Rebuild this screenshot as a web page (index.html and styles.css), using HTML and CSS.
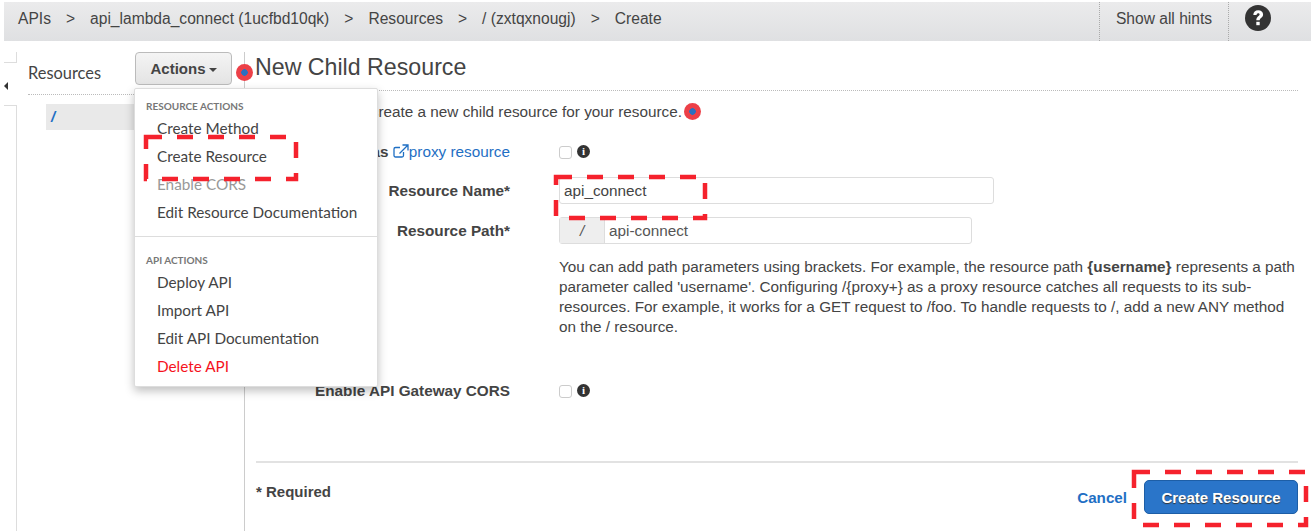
FILE: index.html
```html
<!DOCTYPE html>
<html lang="en">
<head>
  <meta charset="UTF-8">
  <title>New Child Resource</title>
  <link rel="stylesheet" href="styles.css">
</head>
<body>
  <div class="topbar">
    <div class="crumbs">
      <span>APIs</span><span>&gt;</span>
      <span>api_lambda_connect (1ucfbd10qk)</span><span>&gt;</span>
      <span>Resources</span><span>&gt;</span>
      <span>/ (zxtqxnougj)</span><span>&gt;</span>
      <span>Create</span>
    </div>
    <div class="hints">Show all hints</div>
    <div class="help">
      <svg width="26" height="26" viewBox="0 0 26 26">
        <circle cx="13" cy="13" r="13" fill="#333"/>
        <path d="M8.300 10c0-2.900 2.100-4.700 4.900-4.700 2.900 0 4.900 1.700 4.900 4.100 0 3.100-3.400 3.400-3.400 5.800h-3.400c0-3.600 3.300-3.900 3.300-5.600 0-.8-.6-1.300-1.500-1.300-1 0-1.500.7-1.500 1.700z" fill="#fff"/>
        <rect x="11.300" y="16.800" width="3.400" height="3.400" fill="#fff"/>
      </svg>
    </div>
  </div>

  <div class="layout">
    <div class="rail">
      <div class="rail-top"></div>
      <div class="rail-arrow"></div>
      <div class="rail-line"></div>
    </div>

    <aside class="sidebar">
      <div class="side-head">
        <span class="side-title">Resources</span>
        <button class="actions">Actions<i class="caret"></i></button>
      </div>
      <div class="tree-row">/</div>
    </aside>

    <main class="content">
      <h1 class="title">New Child Resource</h1>
      <p class="intro">Use this page to create a new child resource for your resource.<span class="dot dot-intro"></span></p>

      <div class="form-row row-proxy">
        <div class="label label-plain">Configure as <a href="#">
          <svg class="ext" width="16" height="14" viewBox="0 0 16 14" fill="none" stroke="#1f6fc4" stroke-width="1.300">
            <path d="M10.500 8v3.500a1.500 1.500 0 0 1-1.500 1.500H2.500A1.500 1.500 0 0 1 1 11.500V5a1.500 1.500 0 0 1 1.500-1.500H7"/>
            <path d="M9.500 1H15v5.500M15 1L6.500 9.500"/>
          </svg>proxy resource</a></div>
        <div class="field"><input type="checkbox" class="check"><i class="info">i</i></div>
      </div>

      <div class="form-row row-name">
        <div class="label">Resource Name*</div>
        <div class="field"><div class="input input-name">api_connect</div></div>
      </div>

      <div class="form-row row-path">
        <div class="label">Resource Path*</div>
        <div class="field">
          <div class="input input-path"><span class="addon">/</span><span class="path-val">api-connect</span></div>
        </div>
      </div>

      <p class="help-text">You can add path parameters using brackets. For example, the resource path <b>{username}</b> represents a path parameter called 'username'. Configuring /{proxy+} as a proxy resource catches all requests to its sub-resources. For example, it works for a GET request to /foo. To handle requests to /, add a new ANY method on the / resource.</p>

      <div class="form-row row-cors">
        <div class="label">Enable API Gateway CORS</div>
        <div class="field"><input type="checkbox" class="check"><i class="info">i</i></div>
      </div>

      <div class="footer">
        <b class="required">* Required</b>
        <a href="#" class="cancel">Cancel</a>
        <button class="primary">Create Resource</button>
      </div>
    </main>
  </div>

  <span class="dot dot-actions"></span>

  <div class="menu">
    <div class="menu-head">RESOURCE ACTIONS</div>
    <div class="menu-item">Create Method</div>
    <div class="menu-item">Create Resource</div>
    <div class="menu-item disabled">Enable CORS</div>
    <div class="menu-item">Edit Resource Documentation</div>
    <div class="menu-sep"></div>
    <div class="menu-head">API ACTIONS</div>
    <div class="menu-item">Deploy API</div>
    <div class="menu-item">Import API</div>
    <div class="menu-item">Edit API Documentation</div>
    <div class="menu-item danger">Delete API</div>
  </div>

  <!-- red annotation boxes from the tutorial -->
  <svg class="marks" width="1311" height="531" fill="none" stroke="#f5222d" stroke-width="4.500" stroke-dasharray="16 15">
    <rect x="146" y="137" width="150" height="42"/>
    <rect x="556" y="177" width="149" height="41"/>
    <rect x="1134" y="472" width="172" height="53"/>
  </svg>
</body>
</html>
```

FILE: styles.css
```css
html, body {
  margin: 0;
  height: 531px;
  overflow: hidden;
}
body {
  position: relative;
  font-family: "Liberation Sans", Arial, sans-serif;
  font-size: 15.3px;
  color: #444;
  background: #fff;
}

/* top bar */
.topbar {
  display: flex;
  align-items: stretch;
  height: 39px;
  margin: 2px 0 0 4px;
  background: linear-gradient(#ebebec, #dfe0e2);
}
.crumbs {
  flex: 1;
  display: flex;
  align-items: center;
  gap: 15px;
  padding: 0 0 6px 14px;
  font-size: 15.6px;
  color: #444;
}
.hints {
  width: 130px;
  display: flex;
  align-items: center;
  justify-content: center;
  padding-bottom: 6px;
  border-left: 1px dotted #aaa;
  border-right: 1px dotted #aaa;
  box-sizing: border-box;
  font-size: 15.6px;
}
.help {
  width: 82px;
  padding: 3px 0 0 16px;
  box-sizing: border-box;
}

/* columns */
.layout {
  display: flex;
  height: 490px;
}
.rail {
  width: 17px;
  position: relative;
  box-sizing: border-box;
}
.rail-top {
  position: absolute;
  left: 4px;
  top: 11px;
  width: 12px;
  height: 10px;
  border-right: 1px solid #ddd;
  border-bottom: 1px solid #ddd;
}
.rail-arrow {
  position: absolute;
  left: 4px;
  top: 41px;
  border: 4px solid transparent;
  border-left: 0;
  border-right: 4px solid #333;
}
.rail-line {
  position: absolute;
  left: 4px;
  top: 64px;
  bottom: 0;
  width: 12px;
  border-right: 1px solid #ddd;
  border-top: 1px solid #ddd;
}
.sidebar {
  width: 228px;
  border-right: 1px solid #ccc;
  margin-top: 11px;
  box-sizing: border-box;
}
.side-head {
  display: flex;
  align-items: flex-start;
  height: 42px;
  margin: 0 0 9px 11px;
  border-bottom: 1px dotted #bbb;
}
.side-title {
  width: 107px;
  font-family: Lato, sans-serif;
  font-size: 16.400px;
  line-height: 20px;
  color: #444;
  padding-top: 11px;
}
.actions {
  width: 97px;
  height: 33px;
  border: 1px solid #bbb;
  border-radius: 4px;
  background: linear-gradient(#f4f4f4, #e4e4e4);
  font-family: "Liberation Sans", Arial, sans-serif;
  font-size: 15px;
  font-weight: bold;
  color: #444;
  padding: 0;
}
.caret {
  display: inline-block;
  margin-left: 3px;
  vertical-align: 2px;
  border: 4px solid transparent;
  border-bottom: 0;
  border-top: 4px solid #444;
}
.tree-row {
  margin-left: 29px;
  height: 26px;
  line-height: 26px;
  padding-left: 5px;
  background: #e9e9e9;
  color: #1f6fc4;
  font-style: italic;
  font-weight: bold;
  font-size: 15px;
}
.content {
  flex: 1;
  padding: 10px 13px 0 11px;
  position: relative;
  min-width: 0;
}
.title {
  margin: 0;
  font-size: 23.200px;
  font-weight: normal;
  line-height: 32px;
  color: #444;
  text-indent: -1px;
  padding-bottom: 7px;
  border-bottom: 1px dotted #bbb;
}
.intro {
  margin: 11px 0 0;
  line-height: 20px;
}
.form-row {
  display: flex;
  align-items: center;
}
.label {
  width: 254px;
  text-align: right;
  font-weight: bold;
  color: #444;
  flex: none;
}
.label a {
  font-weight: normal;
  color: #1f6fc4;
  text-decoration: none;
}
.ext {
  vertical-align: -1px;
}
.field {
  margin-left: 49px;
  display: flex;
  align-items: center;
  flex: 1;
}
.row-proxy {
  margin-top: 20px;
  height: 20px;
}
.row-name {
  margin-top: 15px;
}
.row-path {
  margin-top: 13px;
}
.row-cors {
  margin-top: 44px;
  height: 20px;
}
.check {
  appearance: none;
  width: 13px;
  height: 13px;
  margin: 0 5px 0 0;
  border: 1px solid #ccc;
  border-radius: 3px;
  background: #fff;
}
.info {
  width: 13px;
  height: 13px;
  border-radius: 50%;
  background: #333;
  color: #fff;
  font: bold 11px/13px "Liberation Serif", serif;
  text-align: center;
  margin-top: -2px;
}
.input {
  box-sizing: border-box;
  height: 27px;
  border: 1px solid #ddd;
  border-radius: 3px;
  color: #444;
  background: #fff;
}
.input-name {
  width: 435px;
  padding-left: 4px;
  line-height: 26px;
}
.input-path {
  width: 413px;
  display: flex;
  line-height: 26px;
  color: #555;
}
.addon {
  width: 45px;
  background: #eee;
  text-align: center;
  border-right: 1px solid #ddd;
  font-style: italic;
  box-sizing: border-box;
}
.path-val {
  padding-left: 4px;
}
.help-text {
  margin: 13px 0 0 303px;
  line-height: 20px;
  color: #444;
}
.footer {
  margin-top: 60px;
  border-top: 2px solid #e2e2e2;
  padding-top: 17px;
  display: flex;
  align-items: flex-start;
}
.required {
  flex: 1;
  padding-top: 3px;
  font-size: 15px;
}
.cancel {
  color: #1f6fc4;
  font-weight: bold;
  text-decoration: none;
  margin-right: 17px;
  padding-top: 9px;
  font-size: 15.200px;
}
.primary {
  width: 154px;
  height: 34px;
  border: 1px solid #1d5ea6;
  border-radius: 5px;
  background: #2a75c9;
  color: #fff;
  font: bold 15px "Liberation Sans", Arial, sans-serif;
  text-shadow: 0 1px 1px #333;
  padding: 0;
}

/* dropdown and things on top */
.menu {
  position: absolute;
  left: 134px;
  top: 88px;
  width: 244px;
  height: 299px;
  box-sizing: border-box;
  background: #fff;
  border: 1px solid #ddd;
  border-radius: 2px;
  box-shadow: 0 4px 10px rgba(0, 0, 0, .25);
  padding: 11px 0 0;
  font-family: Lato, sans-serif;
}
.menu-head {
  padding-left: 11px;
  font-size: 10px;
  font-weight: bold;
  line-height: 12px;
  color: #777;
}
.menu-item {
  height: 28px;
  line-height: 28px;
  padding-left: 22px;
  font-size: 15.300px;
  color: #444;
}
.menu-head + .menu-item {
  margin-top: 2px;
}
.disabled {
  color: #999;
}
.danger {
  color: #f5121d;
}
.menu-sep {
  border-top: 1px solid #ddd;
  margin: 10px 0 17px;
}
.dot {
  display: inline-block;
  width: 17px;
  height: 17px;
  border-radius: 50%;
  box-sizing: border-box;
  background: radial-gradient(circle, #2a6fc0 0 3px, #ec4048 3.500px);
}
.dot-actions {
  position: absolute;
  left: 236px;
  top: 64px;
}
.dot-intro {
  margin-left: 2px;
  vertical-align: -3px;
}
.marks {
  position: absolute;
  left: 0;
  top: 0;
}
```
